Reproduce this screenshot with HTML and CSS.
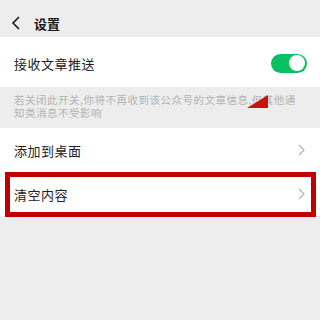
FILE: index.html
```html
<!DOCTYPE html>
<html>
<head>
<meta charset="utf-8">
<link rel="stylesheet" href="styles.css">
</head>
<body>
<div class="page">
  <div class="header">
    <svg class="back" width="10" height="14" viewBox="0 0 10 14"><path d="M8 1 L2 7 L8 13" fill="none" stroke="#1a1a1a" stroke-width="1.6"/></svg>
    <span class="title">设置</span>
  </div>
  <div class="cell first">
    <span class="label">接收文章推送</span>
    <span class="switch"><span class="knob"></span></span>
  </div>
  <div class="desc">若关闭此开关,你将不再收到该公众号的文章信息,但其他通知类消息不受影响</div>
  <div class="cell">
    <span class="label">添加到桌面</span>
    <svg class="chev" width="7" height="12" viewBox="0 0 7 12"><path d="M1 1 L6 6 L1 11" fill="none" stroke="#b2b2b2" stroke-width="1.2"/></svg>
  </div>
  <div class="cell">
    <span class="label">清空内容</span>
    <svg class="chev" width="7" height="12" viewBox="0 0 7 12"><path d="M1 1 L6 6 L1 11" fill="none" stroke="#b2b2b2" stroke-width="1.2"/></svg>
  </div>
  <div class="highlight"></div>
  <svg class="arrow" width="22" height="14" viewBox="0 0 22 14"><polygon points="0,13 21,0 21,13" fill="#c4140d"/></svg>
</div>
</body>
</html>
```
FILE: styles.css
```css
html, body {
  margin: 0;
  padding: 0;
  background: #ededed;
}
.page {
  position: relative;
  width: 320px;
  height: 320px;
  font-family: "Noto Sans CJK SC", "Noto Sans", sans-serif;
  color: #1a1a1a;
}
.header {
  height: 37px;
  display: flex;
  align-items: center;
  padding-left: 11px;
  gap: 13px;
  box-sizing: border-box;
  padding-top: 9px;
}
.title {
  font-size: 13px;
  font-weight: bold;
}
.cell {
  height: 44px;
  background: #fff;
  display: flex;
  align-items: center;
  justify-content: space-between;
  padding: 0 14px 0 14px;
  box-sizing: border-box;
}
.cell.first {
  height: 50px;
  padding-right: 13px;
  padding-top: 2px;
}
.label {
  font-size: 13px;
  letter-spacing: 0.5px;
  color: #222;
}
.switch {
  width: 36px;
  height: 19px;
  border-radius: 10px;
  background: #07c160;
  display: flex;
  align-items: center;
  justify-content: flex-end;
  padding: 0 2px;
  box-sizing: border-box;
}
.knob {
  width: 16px;
  height: 16px;
  border-radius: 50%;
  background: #fff;
}
.desc {
  height: 41px;
  box-sizing: border-box;
  padding: 6px 16px 0 14px;
  font-size: 10.5px;
  line-height: 13px;
  color: #b3b3b3;
  letter-spacing: 0.5px;
}
.chev {
  margin-right: 1px;
}
.highlight {
  position: absolute;
  left: 5px;
  top: 172px;
  width: 311px;
  height: 45px;
  border: 5px solid #c00000;
  box-sizing: border-box;
}
.arrow {
  position: absolute;
  left: 247px;
  top: 95px;
}
```
